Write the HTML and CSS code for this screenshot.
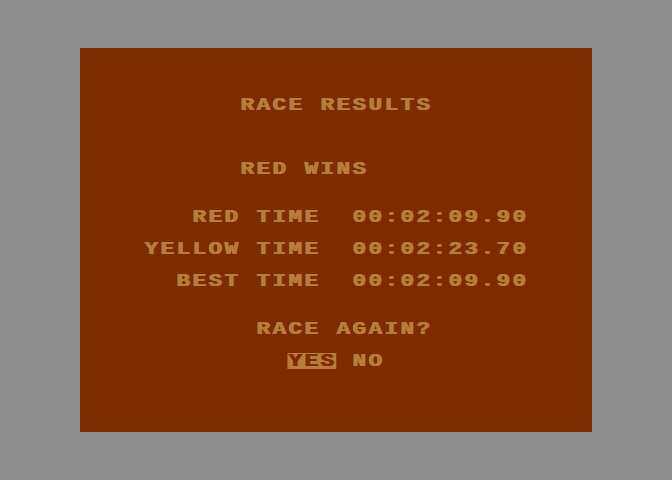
FILE: index.html
```html
<!DOCTYPE html>
<html lang="en">
<head>
  <meta charset="UTF-8" />
  <meta name="viewport" content="width=device-width, initial-scale=1.0"/>
  <title>Race Results</title>
  <link rel="stylesheet" href="styles.css">
</head>
<body>

  <!-- 32 x 24 text screen, one character per 16px cell -->
  <div class="screen">
<pre class="text">



          RACE RESULTS



          RED WINS


       RED TIME  00:02:09.90

    YELLOW TIME  00:02:23.70

      BEST TIME  00:02:09.90


           RACE AGAIN?

             <span class="inverse">YES</span> NO
</pre>
  </div>

</body>
</html>
```

FILE: styles.css
```css
body {
  margin: 0;
  background: #8e8e8e;
  height: 100vh;
  display: flex;
  justify-content: center;
  align-items: center;
}

.screen {
  width: 512px;
  height: 384px;
  background: #7c2c00;
  overflow: hidden;
}

/* 10.8px advance + 2px spacing, widened 1.25x = 16px per cell */
.text {
  margin: 0;
  padding-top: 1px;
  font-family: "Liberation Mono", monospace;
  font-weight: bold;
  font-size: 18px;
  line-height: 16px;
  letter-spacing: 2px;
  color: #b87c3c;
  text-shadow: 1px 0 0 currentColor;
  transform: scaleX(1.25);
  transform-origin: 0 0;
}

.inverse {
  display: inline-block;
  height: 16px;
  background: #b87c3c;
  color: #7c2c00;
}
```
